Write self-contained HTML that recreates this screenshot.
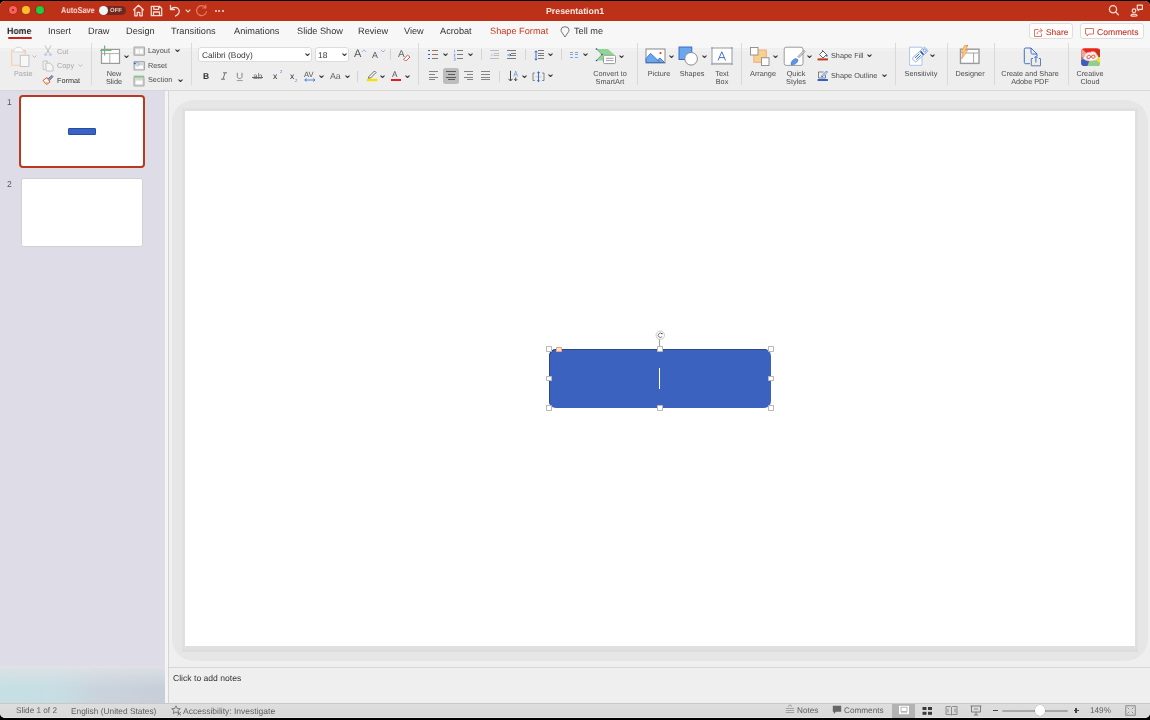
<!DOCTYPE html>
<html><head><meta charset="utf-8">
<style>
*{margin:0;padding:0;box-sizing:border-box}
html,body{-webkit-font-smoothing:antialiased;text-rendering:geometricPrecision;width:1150px;height:720px;overflow:hidden;background:#000;font-family:"Liberation Sans",sans-serif}
.a{position:absolute}
#win{position:absolute;left:0;top:1px;width:1150px;height:717px;background:#efefef;border-radius:5px;overflow:hidden}
#title{position:absolute;left:0;top:0;width:1150px;height:20px;background:#bd3119}
#tabs{position:absolute;left:0;top:20px;width:1150px;height:28px;background:#f7f7f7}
#ribbon{position:absolute;left:0;top:47px;width:1150px;height:42px;background:linear-gradient(180deg,#efefef 0px,#efefef 2px,#f3f3f3 2px,#f3f3f3 3px,#eeeeee 3px)}
#rbline{position:absolute;left:0;top:88.5px;width:1150px;height:1.5px;background:#d7d7d7}
#left{position:absolute;left:0;top:90px;width:165px;height:612px;background:#dedde7}
#lstrip{position:absolute;left:165px;top:90px;width:3px;height:612px;background:#f4f4f4}
#lline{position:absolute;left:168px;top:90px;width:1px;height:612px;background:#d4d4d4}
#main{position:absolute;left:169px;top:90px;width:981px;height:612px;background:#efefef}
#frame{position:absolute;left:172px;top:99px;width:976px;height:561px;background:#e6e6e6;border-radius:22px}
#slide{position:absolute;left:185px;top:110px;width:950px;height:535px;background:#fff;box-shadow:0 0 0 3px #e0e0e0,0 3px 0 3px #dddddd}
#notesline{position:absolute;left:169px;top:666px;width:981px;height:1px;background:#d6d6d6}
#status{position:absolute;left:0;top:702px;width:1150px;height:15px;background:linear-gradient(180deg,#dedede,#d9d9d9);border-top:1px solid #c8c8c8;border-bottom:1px solid #e4e4e4}
.t{position:absolute;white-space:nowrap;line-height:1;will-change:transform}
.tab{font-size:9.2px;color:#333;top:5.6px}
#tabs{top:20px;height:27px}
#lbot{position:absolute;left:0;top:665px;width:165px;height:37px;background:linear-gradient(180deg,rgba(224,226,230,1) 0px,rgba(222,225,230,0.7) 5px,rgba(222,225,230,0) 22px),linear-gradient(100deg,#c5e0e4 0%,#c7dde3 38%,#cad3dc 60%,#c8ced8 100%)}
</style></head><body>
<div id="win">
<div id="title">
<div class="a" style="left:8.5px;top:5px;width:8px;height:8px;border-radius:50%;background:#fe5f57;box-shadow:0 0 0 0.6px #8a2a1c"></div>
<div class="a" style="left:11.5px;top:8px;width:2px;height:2px;border-radius:50%;background:#7e2a22"></div>
<div class="a" style="left:22px;top:5px;width:8px;height:8px;border-radius:50%;background:#febc2e;box-shadow:0 0 0 0.6px #8a4a1c"></div>
<div class="a" style="left:35.5px;top:5px;width:8px;height:8px;border-radius:50%;background:#28c840;box-shadow:0 0 0 0.6px #4a3a1c"></div>
<div class="t" style="left:61px;top:5px;font-size:8.6px;font-weight:bold;color:#f7dcd5;transform-origin:0 0;transform:scaleX(0.85)">AutoSave</div>
<div class="a" style="left:98.5px;top:4.5px;width:27px;height:9.5px;border-radius:5px;background:#6e2a1f"></div>
<div class="a" style="left:99px;top:4.8px;width:9px;height:9px;border-radius:50%;background:#f4f4f4"></div>
<div class="t" style="left:109.5px;top:6.5px;font-size:6px;font-weight:bold;color:#e8c9c2">OFF</div>
<svg class="a" style="left:132px;top:3.3px" width="13" height="13" viewBox="0 0 13 13" fill="none" stroke="#f6dcd4" stroke-width="1.3" stroke-linejoin="round"><path d="M1.3 6.3 L6.5 1.3 L11.7 6.3 M2.8 5 V11.8 H5.2 V8.3 H7.8 V11.8 H10.2 V5"/></svg>
<svg class="a" style="left:150px;top:3.5px" width="13" height="12" viewBox="0 0 13 12" fill="none" stroke="#f6dcd4" stroke-width="1.3" stroke-linejoin="round"><path d="M1.3 1.3 H9.5 L11.7 3.5 V10.7 H1.3 Z M3.8 1.3 V4.3 H8.7 V1.3 M3.5 10.7 V7 H9.5 V10.7"/></svg>
<svg class="a" style="left:169px;top:2.8px" width="12" height="13" viewBox="0 0 12 13" fill="none" stroke="#f6dcd4" stroke-width="1.3" stroke-linecap="round" stroke-linejoin="round"><path d="M1.5 1.5 V5.5 H5.5 M1.8 5.3 C3.5 3 8 2.5 9.8 5.5 C11.2 8 9.5 10.5 6.5 12"/></svg>
<svg class="a" style="left:184.5px;top:8px" width="6" height="4" viewBox="0 0 6 4" fill="none" stroke="#f6dcd4" stroke-width="1.1"><path d="M0.7 0.7 L3 3 L5.3 0.7"/></svg>
<svg class="a" style="left:194.5px;top:3px" width="13" height="13" viewBox="0 0 13 13" fill="none" stroke="#e77a63" stroke-width="1.2" stroke-linecap="round"><path d="M10.5 3.5 A5 5 0 1 0 11.5 7.5 M10.8 1 V4 H7.8"/></svg>
<div class="a" style="left:214.5px;top:9px;width:2px;height:2px;border-radius:50%;background:#f6dcd4"></div>
<div class="a" style="left:218px;top:9px;width:2px;height:2px;border-radius:50%;background:#f6dcd4"></div>
<div class="a" style="left:221.5px;top:9px;width:2px;height:2px;border-radius:50%;background:#f6dcd4"></div>
<div class="t" style="left:545.5px;top:5.5px;font-size:8.8px;font-weight:bold;color:#f9e6e1">Presentation1</div>
<svg class="a" style="left:1107px;top:3.3px" width="14" height="14" viewBox="0 0 14 14" fill="none" stroke="#f6dcd4" stroke-width="1.3" stroke-linecap="round"><circle cx="6" cy="5.2" r="3.6"/><path d="M8.7 7.9 L11.3 10.7"/></svg>
<svg class="a" style="left:1130px;top:3px" width="14" height="14" viewBox="0 0 14 14" fill="none" stroke="#f6dcd4" stroke-width="1.2" stroke-linejoin="round"><path d="M7.3 1.2 H12.4 V5.3 H9.6 L8.2 6.6 V5.3 H7.3 Z"/><circle cx="4" cy="6.7" r="1.8"/><path d="M1 11.6 C1 9.6 7 9.6 7 11.6 C7 12.4 1 12.4 1 11.6 Z"/></svg>
</div>

<div id="tabs">
<div class="t tab" style="left:7px;color:#1d1d1d;font-weight:bold;transform-origin:0 0;transform:scaleX(0.95)">Home</div>
<div class="a" style="left:7.5px;top:16px;width:24.5px;height:2px;border-radius:1px;background:#c0271a"></div>
<div class="t tab" style="left:47.5px">Insert</div>
<div class="t tab" style="left:88px">Draw</div>
<div class="t tab" style="left:125.7px">Design</div>
<div class="t tab" style="left:171px">Transitions</div>
<div class="t tab" style="left:234px">Animations</div>
<div class="t tab" style="left:297px">Slide Show</div>
<div class="t tab" style="left:358px">Review</div>
<div class="t tab" style="left:403.7px">View</div>
<div class="t tab" style="left:440.3px">Acrobat</div>
<div class="t tab" style="left:489.6px;color:#c5371f">Shape Format</div>
<svg class="a" style="left:559.5px;top:4.5px" width="10" height="12" viewBox="0 0 10 12" fill="none" stroke="#666" stroke-width="0.9" stroke-linejoin="round"><path d="M5 11 L2.2 6.8 C1.2 5.5 1 4.8 1 4 A4 3.3 0 0 1 9 4 C9 4.8 8.8 5.5 7.8 6.8 Z"/></svg>
<div class="t tab" style="left:574px">Tell me</div>
<div class="a" style="left:1028.7px;top:2.4px;width:44px;height:15.8px;border-radius:3px;background:#fff;border:0.8px solid #dedede"></div>
<svg class="a" style="left:1033px;top:5.8px" width="11" height="11" viewBox="0 0 11 11" fill="none" stroke="#d86a58" stroke-width="0.9"><path d="M5.5 2.5 H1.5 V9.5 H8.5 V6.5"/><path d="M4 7 C4.5 4.5 6.5 3.5 9 3.5 M7.3 1.7 L9.3 3.5 L7.3 5.3" stroke-linecap="round" stroke-linejoin="round"/></svg>
<div class="t" style="left:1045.5px;top:7.3px;font-size:8.4px;color:#c0392b;-webkit-text-stroke:0.12px #c0392b">Share</div>
<div class="a" style="left:1079.5px;top:2.4px;width:64.5px;height:15.8px;border-radius:3px;background:#fff;border:0.8px solid #dedede"></div>
<svg class="a" style="left:1084px;top:5.8px" width="11" height="11" viewBox="0 0 11 11" fill="none" stroke="#d86a58" stroke-width="0.9" stroke-linejoin="round"><path d="M1.5 1.5 H9.5 V7 H5 L3 9 V7 H1.5 Z"/></svg>
<div class="t" style="left:1096.6px;top:7.3px;font-size:8.6px;color:#c0392b;-webkit-text-stroke:0.12px #c0392b">Comments</div>
</div>

<div id="ribbon"></div>
<div id="rbline"></div>
<div id="left"></div>
<div id="lbot"></div>
<div id="lstrip"></div>
<div id="lline"></div>
<div id="main"></div>
<div id="frame"></div>
<div id="slide"></div>
<div id="notesline"></div>
<div id="status"></div>
<div class="a" style="left:0;top:-1px;width:1150px;height:720px">
<svg class="a" style="left:10px;top:46px" width="22" height="22" viewBox="0 0 22 22" >
<path d="M4 4.3 C4.3 2.5 6.5 1.2 8.5 1.2 C10.5 1.2 12.7 2.5 13 4.3 H13.8 V6 H3.2 V4.3 Z" fill="#fafafa" stroke="#d2d2d2" stroke-width="0.9"/>
<path d="M3.2 4.5 H1.6 V19.2 H10" fill="none" stroke="#f6cfae" stroke-width="1.1"/>
<path d="M14 4.5 H15.2 V8.5" fill="none" stroke="#f4bfa9" stroke-width="1.1"/>
<rect x="10.3" y="9.3" width="8.6" height="11.2" fill="#f8f8f8" stroke="#c6c6c6" stroke-width="1"/></svg>
<svg class="a" style="left:32.30px;top:54.70px" width="5" height="3.4" viewBox="-0.5 -0.5 5 3.4" fill="none" stroke="#b5b5b5" stroke-width="0.9" stroke-linecap="round" stroke-linejoin="round"><path d="M0.3 0.3 L2.0 2.1 L3.7 0.3"/></svg>
<div class="t" style="left:13.60px;top:69.72px;font-size:7.3px;color:#a6a6a6">Paste</div>
<svg class="a" style="left:43px;top:45px" width="10" height="12" viewBox="0 0 10 12" ><path d="M2 0.5 L6.3 8 M8 0.5 L3.7 8" stroke="#b8b8b8" stroke-width="0.9" fill="none"/>
<circle cx="2.7" cy="9.6" r="1.5" fill="#b8d0ee"/><circle cx="7.3" cy="9.6" r="1.5" fill="#b8d0ee"/></svg>
<div class="t" style="left:56.50px;top:47.62px;font-size:7.3px;color:#a6a6a6">Cut</div>
<svg class="a" style="left:41.5px;top:59.5px" width="13" height="12" viewBox="0 0 13 12" ><path d="M5 1 H1 V9.5 H3.7" fill="none" stroke="#c4c4c4" stroke-width="0.9"/>
<path d="M4 1 H4.5 M3.8 3.2 H8 L11 6 V11 H4.2 Z" fill="#f6f6f6" stroke="#bdbdbd" stroke-width="0.9"/>
<path d="M4 1 H5.3 V3" fill="none" stroke="#c4c4c4" stroke-width="0.9"/></svg>
<div class="t" style="left:56.50px;top:62.02px;font-size:7.3px;color:#a6a6a6">Copy</div>
<svg class="a" style="left:77.50px;top:64.00px" width="5" height="3.2" viewBox="-0.5 -0.5 5 3.2" fill="none" stroke="#b0b0b0" stroke-width="0.8" stroke-linecap="round" stroke-linejoin="round"><path d="M0.3 0.3 L2.0 1.9000000000000001 L3.7 0.3"/></svg>
<svg class="a" style="left:41.5px;top:74px" width="12" height="11" viewBox="0 0 12 11" ><path d="M1 6.5 L5 3.5 L8 8 L4.5 10.5 Z" fill="#ffffff" stroke="#e23b2c" stroke-width="0.9"/>
<path d="M3 8.6 L5.2 7.5 L6 8.9 L4.2 10" fill="#f4c64c"/>
<path d="M5.8 5 L10 1.5 L11 2.6 L7.3 6.6" fill="#8aa7c7" stroke="#555" stroke-width="0.8"/></svg>
<div class="t" style="left:56.50px;top:76.72px;font-size:7.3px;color:#333">Format</div>
<div class="a" style="left:91.00px;top:43px;width:1px;height:42px;background:#d9d9d9"></div>
<svg class="a" style="left:99px;top:45px" width="24" height="20" viewBox="0 0 24 20" ><rect x="2.5" y="4.4" width="18" height="14" fill="#fff" stroke="#9a9a9a" stroke-width="1.2"/>
<path d="M2.5 8.6 H20.5 M10.8 8.6 V18.4" stroke="#a5a5a5" stroke-width="0.9"/>
<path d="M5.6 0.8 V10.4" stroke="#9a9a9a" stroke-width="1.1"/><path d="M5.6 0.8 V2.6" stroke="#4cc15a" stroke-width="1.1"/>
<path d="M1 5.5 H12.5" stroke="#5cc56a" stroke-width="1"/></svg>
<svg class="a" style="left:123.90px;top:55.05px" width="5" height="3.3" viewBox="-0.5 -0.5 5 3.3" fill="none" stroke="#3c3c3c" stroke-width="1.15" stroke-linecap="round" stroke-linejoin="round"><path d="M0.3 0.3 L2.0 1.9999999999999998 L3.7 0.3"/></svg>
<div class="t" style="left:54.00px;width:120px;text-align:center;top:70.02px;font-size:7.3px;color:#4d4d4d">New</div>
<div class="t" style="left:54.00px;width:120px;text-align:center;top:77.82px;font-size:7.3px;color:#4d4d4d">Slide</div>
<svg class="a" style="left:133px;top:45.5px" width="13" height="10" viewBox="0 0 13 10" ><rect x="1" y="1" width="10.5" height="8.3" rx="0.8" fill="#d6d6d6" stroke="#a9a9a9" stroke-width="1.1"/><rect x="2.7" y="3.2" width="3.1" height="4.4" fill="#fff"/><rect x="6.7" y="3.2" width="3.1" height="4.4" fill="#fff"/></svg>
<div class="t" style="left:148.30px;top:47.22px;font-size:7.3px;color:#4d4d4d">Layout</div>
<svg class="a" style="left:174.50px;top:49.35px" width="5" height="3.3" viewBox="-0.5 -0.5 5 3.3" fill="none" stroke="#3c3c3c" stroke-width="1.15" stroke-linecap="round" stroke-linejoin="round"><path d="M0.3 0.3 L2.0 1.9999999999999998 L3.7 0.3"/></svg>
<svg class="a" style="left:133px;top:60px" width="13" height="11" viewBox="0 0 13 11" ><rect x="1" y="1.5" width="10.5" height="8.5" rx="0.8" fill="#d6d6d6" stroke="#a9a9a9" stroke-width="1.1"/><rect x="2.5" y="5.5" width="7.5" height="3.3" fill="#fff"/><path d="M2.3 3.6 C3 1.8 5.5 1.8 6 3.8 C6.4 5.5 4.8 6.5 3.5 6" fill="none" stroke="#8fb6ea" stroke-width="0.9"/><circle cx="1.8" cy="3.3" r="0.9" fill="#2f55b8"/></svg>
<div class="t" style="left:148.30px;top:61.62px;font-size:7.3px;color:#4d4d4d">Reset</div>
<svg class="a" style="left:133px;top:74.5px" width="13" height="12" viewBox="0 0 13 12" ><rect x="1" y="2" width="10" height="9" rx="0.8" fill="#d6d6d6" stroke="#a9a9a9" stroke-width="1.1"/><rect x="2.6" y="5.6" width="6.8" height="3.6" fill="#fff"/><path d="M0.8 1.3 H11.2" stroke="#6fd07c" stroke-width="1.3"/></svg>
<div class="t" style="left:148.30px;top:76.42px;font-size:7.3px;color:#4d4d4d">Section</div>
<svg class="a" style="left:177.50px;top:79.05px" width="5" height="3.3" viewBox="-0.5 -0.5 5 3.3" fill="none" stroke="#3c3c3c" stroke-width="1.15" stroke-linecap="round" stroke-linejoin="round"><path d="M0.3 0.3 L2.0 1.9999999999999998 L3.7 0.3"/></svg>
<div class="a" style="left:191.00px;top:43px;width:1px;height:42px;background:#d9d9d9"></div>
<div class="a" style="left:198.3px;top:47.2px;width:113.7px;height:15.2px;background:#fff;border:0.5px solid #dcdcdc;border-radius:3px"></div>
<div class="t" style="left:201.60px;top:50.59px;font-size:8.4px;color:#3a3a3a">Calibri (Body)</div>
<svg class="a" style="left:304.50px;top:53.35px" width="5" height="3.3" viewBox="-0.5 -0.5 5 3.3" fill="none" stroke="#3c3c3c" stroke-width="1.15" stroke-linecap="round" stroke-linejoin="round"><path d="M0.3 0.3 L2.0 1.9999999999999998 L3.7 0.3"/></svg>
<div class="a" style="left:314.5px;top:47.2px;width:34.5px;height:15.2px;background:#fff;border:0.5px solid #dcdcdc;border-radius:3px"></div>
<div class="t" style="left:317.60px;top:50.59px;font-size:8.4px;color:#3a3a3a">18</div>
<svg class="a" style="left:342.30px;top:53.35px" width="5" height="3.3" viewBox="-0.5 -0.5 5 3.3" fill="none" stroke="#3c3c3c" stroke-width="1.15" stroke-linecap="round" stroke-linejoin="round"><path d="M0.3 0.3 L2.0 1.9999999999999998 L3.7 0.3"/></svg>
<div class="t" style="left:353.70px;top:48.89px;font-size:11px;color:#555">A</div>
<svg class="a" style="left:361px;top:49px" width="6" height="4" viewBox="0 0 6 4" ><path d="M0.8 3 L3 0.8 L5.2 3" fill="none" stroke="#7aa6e0" stroke-width="0.8"/></svg>
<div class="t" style="left:372.00px;top:50.75px;font-size:8.8px;color:#555">A</div>
<svg class="a" style="left:379.5px;top:49px" width="6" height="4" viewBox="0 0 6 4" ><path d="M0.8 0.8 L3 3 L5.2 0.8" fill="none" stroke="#7aa6e0" stroke-width="0.8"/></svg>
<div class="a" style="left:390.00px;top:49px;width:1px;height:11px;background:#d4d4d4"></div>
<div class="t" style="left:398.00px;top:49.73px;font-size:10px;color:#666">A</div>
<svg class="a" style="left:401.5px;top:53.5px" width="9" height="7" viewBox="0 0 9 7" ><path d="M1.5 5.5 L5.5 1 L8 3 L4 7 Z" fill="#fff" stroke="#d9534f" stroke-width="0.9"/></svg>
<div class="t" style="left:203.40px;top:71.70px;font-size:8.5px;color:#333;font-weight:bold">B</div>
<svg class="a" style="left:219.5px;top:72px" width="8" height="8" viewBox="0 0 8 8" ><path d="M3 0.8 H7 M1 7.2 H5 M5 0.8 L3 7.2" stroke="#666" stroke-width="0.9" fill="none"/></svg>
<svg class="a" style="left:236px;top:72px" width="8" height="10" viewBox="0 0 8 10" ><path d="M1.3 0.8 V4.5 C1.3 7.2 6 7.2 6 4.5 V0.8" stroke="#777" stroke-width="0.9" fill="none"/><path d="M0.8 8.6 H6.8" stroke="#9a9a9a" stroke-width="1"/></svg>
<div class="t" style="left:252.80px;top:72.49px;font-size:8.4px;color:#666">ab</div>
<div class="a" style="left:252.2px;top:76.6px;width:11px;height:0.9px;background:#666"></div>
<div class="t" style="left:272.80px;top:71.62px;font-size:8.6px;color:#333">x</div>
<div class="t" style="left:279.80px;top:70.04px;font-size:4.2px;color:#3d7fd9">2</div>
<div class="t" style="left:290.00px;top:71.62px;font-size:8.6px;color:#333">x</div>
<div class="t" style="left:295.30px;top:78.64px;font-size:4.2px;color:#3d7fd9">2</div>
<div class="t" style="left:304.20px;top:70.57px;font-size:7.6px;color:#555">AV</div>
<svg class="a" style="left:304px;top:77.5px" width="12" height="4" viewBox="0 0 12 4" ><path d="M0.8 2 H11 M2.5 0.5 L0.8 2 L2.5 3.5 M9.3 0.5 L11 2 L9.3 3.5" stroke="#3b78d8" stroke-width="0.9" fill="none"/></svg>
<svg class="a" style="left:319.30px;top:74.55px" width="5" height="3.3" viewBox="-0.5 -0.5 5 3.3" fill="none" stroke="#3c3c3c" stroke-width="1.15" stroke-linecap="round" stroke-linejoin="round"><path d="M0.3 0.3 L2.0 1.9999999999999998 L3.7 0.3"/></svg>
<div class="t" style="left:329.80px;top:72.05px;font-size:8.8px;color:#666">Aa</div>
<svg class="a" style="left:344.50px;top:74.55px" width="5" height="3.3" viewBox="-0.5 -0.5 5 3.3" fill="none" stroke="#3c3c3c" stroke-width="1.15" stroke-linecap="round" stroke-linejoin="round"><path d="M0.3 0.3 L2.0 1.9999999999999998 L3.7 0.3"/></svg>
<div class="a" style="left:356.50px;top:70.5px;width:1px;height:11.0px;background:#d4d4d4"></div>
<svg class="a" style="left:365.5px;top:70px" width="12" height="12" viewBox="0 0 12 12" ><path d="M3 6.5 L8.5 1 L10 2.5 L4.5 8 L2.5 8.3 Z" fill="#fff" stroke="#555" stroke-width="0.9"/><rect x="0.8" y="8.8" width="10.5" height="2.4" fill="#f6e000"/></svg>
<svg class="a" style="left:379.70px;top:74.55px" width="5" height="3.3" viewBox="-0.5 -0.5 5 3.3" fill="none" stroke="#3c3c3c" stroke-width="1.15" stroke-linecap="round" stroke-linejoin="round"><path d="M0.3 0.3 L2.0 1.9999999999999998 L3.7 0.3"/></svg>
<div class="t" style="left:392.00px;top:71.06px;font-size:8.2px;color:#555">A</div>
<div class="a" style="left:390.5px;top:78.8px;width:10.5px;height:2.4px;background:#e31e1e"></div>
<svg class="a" style="left:405.00px;top:74.55px" width="5" height="3.3" viewBox="-0.5 -0.5 5 3.3" fill="none" stroke="#3c3c3c" stroke-width="1.15" stroke-linecap="round" stroke-linejoin="round"><path d="M0.3 0.3 L2.0 1.9999999999999998 L3.7 0.3"/></svg>
<div class="a" style="left:418.00px;top:43px;width:1px;height:42px;background:#d9d9d9"></div>
<div class="a" style="left:428.4px;top:49.7px;width:1.6px;height:1.6px;background:#1f5fd0;border-radius:0.3px"></div>
<div class="a" style="left:428.4px;top:53.7px;width:1.6px;height:1.6px;background:#1f5fd0;border-radius:0.3px"></div>
<div class="a" style="left:428.4px;top:57.7px;width:1.6px;height:1.6px;background:#1f5fd0;border-radius:0.3px"></div>
<div class="a" style="left:432px;top:50.05px;width:6px;height:0.9px;background:#7a7a7a"></div>
<div class="a" style="left:432px;top:54.05px;width:6px;height:0.9px;background:#7a7a7a"></div>
<div class="a" style="left:432px;top:58.05px;width:6px;height:0.9px;background:#7a7a7a"></div>
<div class="a" style="left:432px;top:50px;width:1.6px;height:1px;background:#e05a3c"></div><div class="a" style="left:432px;top:54px;width:1.6px;height:1px;background:#e05a3c"></div>
<svg class="a" style="left:442.90px;top:53.35px" width="5" height="3.3" viewBox="-0.5 -0.5 5 3.3" fill="none" stroke="#3c3c3c" stroke-width="1.15" stroke-linecap="round" stroke-linejoin="round"><path d="M0.3 0.3 L2.0 1.9999999999999998 L3.7 0.3"/></svg>
<svg class="a" style="left:453px;top:48.5px" width="3" height="12" viewBox="0 0 3 12" ><path d="M1.5 0.8 V3.5 M0.8 5.3 H2.2 L1 7.2 H2.3 M0.8 9 H2.2 V11.3 H0.8" stroke="#4a86de" stroke-width="0.6" fill="none"/></svg>
<div class="a" style="left:456.8px;top:50.05px;width:6.7px;height:0.9px;background:#7a7a7a"></div>
<div class="a" style="left:456.8px;top:54.05px;width:6.7px;height:0.9px;background:#7a7a7a"></div>
<div class="a" style="left:456.8px;top:58.05px;width:6.7px;height:0.9px;background:#7a7a7a"></div>
<svg class="a" style="left:468.20px;top:53.35px" width="5" height="3.3" viewBox="-0.5 -0.5 5 3.3" fill="none" stroke="#3c3c3c" stroke-width="1.15" stroke-linecap="round" stroke-linejoin="round"><path d="M0.3 0.3 L2.0 1.9999999999999998 L3.7 0.3"/></svg>
<div class="a" style="left:480.50px;top:49.3px;width:1px;height:11.0px;background:#d4d4d4"></div>
<div class="a" style="left:489.7px;top:50.1px;width:9.3px;height:0.8px;background:#bcbcbc"></div>
<div class="a" style="left:489.7px;top:58.1px;width:9.3px;height:0.8px;background:#bcbcbc"></div>
<div class="a" style="left:494px;top:52.800000000000004px;width:5px;height:0.8px;background:#bcbcbc"></div>
<div class="a" style="left:494px;top:55.4px;width:5px;height:0.8px;background:#bcbcbc"></div>
<svg class="a" style="left:489.5px;top:52.5px" width="5" height="4" viewBox="0 0 5 4" ><path d="M4.5 2 H1 M2.3 0.8 L1 2 L2.3 3.2" stroke="#a9c6ee" stroke-width="0.7" fill="none"/></svg>
<div class="a" style="left:506.6px;top:50.05px;width:9.6px;height:0.9px;background:#7a7a7a"></div>
<div class="a" style="left:506.6px;top:58.05px;width:9.6px;height:0.9px;background:#7a7a7a"></div>
<div class="a" style="left:511.2px;top:52.75px;width:5px;height:0.9px;background:#7a7a7a"></div>
<div class="a" style="left:511.2px;top:55.349999999999994px;width:5px;height:0.9px;background:#7a7a7a"></div>
<svg class="a" style="left:506.5px;top:52.5px" width="5" height="4" viewBox="0 0 5 4" ><path d="M0.5 2 H4 M2.7 0.8 L4 2 L2.7 3.2" stroke="#1f5fd0" stroke-width="0.8" fill="none"/></svg>
<div class="a" style="left:524.80px;top:49.3px;width:1px;height:11.0px;background:#d4d4d4"></div>
<svg class="a" style="left:533.5px;top:49.5px" width="4" height="11" viewBox="0 0 4 11" ><path d="M2 1 V10 M0.8 2.2 L2 0.8 L3.2 2.2 M0.8 8.8 L2 10.2 L3.2 8.8" stroke="#1f5fd0" stroke-width="0.9" fill="none"/></svg>
<div class="a" style="left:538px;top:50.05px;width:6px;height:0.9px;background:#7a7a7a"></div>
<div class="a" style="left:538px;top:52.65px;width:6px;height:0.9px;background:#7a7a7a"></div>
<div class="a" style="left:538px;top:55.349999999999994px;width:6px;height:0.9px;background:#7a7a7a"></div>
<div class="a" style="left:538px;top:58.05px;width:6px;height:0.9px;background:#7a7a7a"></div>
<svg class="a" style="left:548.30px;top:53.35px" width="5" height="3.3" viewBox="-0.5 -0.5 5 3.3" fill="none" stroke="#3c3c3c" stroke-width="1.15" stroke-linecap="round" stroke-linejoin="round"><path d="M0.3 0.3 L2.0 1.9999999999999998 L3.7 0.3"/></svg>
<div class="a" style="left:560.50px;top:49.3px;width:1px;height:11.0px;background:#d4d4d4"></div>
<div class="a" style="left:570px;top:52.1px;width:3.4px;height:0.8px;background:#7aa6e8"></div>
<div class="a" style="left:570px;top:54.300000000000004px;width:3.4px;height:0.8px;background:#7aa6e8"></div>
<div class="a" style="left:570px;top:56.5px;width:3.4px;height:0.8px;background:#7aa6e8"></div>
<div class="a" style="left:574.6px;top:52.1px;width:3.4px;height:0.8px;background:#7aa6e8"></div>
<div class="a" style="left:574.6px;top:54.300000000000004px;width:3.4px;height:0.8px;background:#7aa6e8"></div>
<div class="a" style="left:574.6px;top:56.5px;width:3.4px;height:0.8px;background:#7aa6e8"></div>
<svg class="a" style="left:583.30px;top:53.35px" width="5" height="3.3" viewBox="-0.5 -0.5 5 3.3" fill="none" stroke="#3c3c3c" stroke-width="1.15" stroke-linecap="round" stroke-linejoin="round"><path d="M0.3 0.3 L2.0 1.9999999999999998 L3.7 0.3"/></svg>
<svg class="a" style="left:595px;top:48px" width="22" height="17" viewBox="0 0 22 17" ><path d="M1.5 1 H13 L19 6.5 L13 12.5 H1.5 L7 6.5 Z" fill="#8fd694"/>
<path d="M1.5 1 L7 6.5 L1.5 12.5" fill="none" stroke="#3d8b48" stroke-width="0.6"/>
<circle cx="1.5" cy="1" r="0.8" fill="#1f3fae"/><circle cx="7" cy="6.5" r="0.8" fill="#1f3fae"/><circle cx="1.5" cy="12.5" r="0.8" fill="#1f3fae"/>
<rect x="8.5" y="7.3" width="12" height="8.3" rx="1.2" fill="#fff" stroke="#9a9a9a" stroke-width="1"/>
<path d="M11 10.3 H18.5 M11 12.6 H18.5" stroke="#777" stroke-width="0.7"/></svg>
<svg class="a" style="left:619.30px;top:54.85px" width="5" height="3.3" viewBox="-0.5 -0.5 5 3.3" fill="none" stroke="#3c3c3c" stroke-width="1.15" stroke-linecap="round" stroke-linejoin="round"><path d="M0.3 0.3 L2.0 1.9999999999999998 L3.7 0.3"/></svg>
<div class="t" style="left:550.30px;width:120px;text-align:center;top:70.02px;font-size:7.3px;color:#4d4d4d">Convert to</div>
<div class="t" style="left:550.30px;width:120px;text-align:center;top:77.82px;font-size:7.3px;color:#4d4d4d">SmartArt</div>
<div class="a" style="left:636.50px;top:43px;width:1px;height:42px;background:#d9d9d9"></div>
<div class="a" style="left:429.1px;top:71.35px;width:9px;height:0.9px;background:#858585"></div>
<div class="a" style="left:429.1px;top:73.95px;width:6px;height:0.9px;background:#858585"></div>
<div class="a" style="left:429.1px;top:76.75px;width:9px;height:0.9px;background:#858585"></div>
<div class="a" style="left:429.1px;top:79.45px;width:6px;height:0.9px;background:#858585"></div>
<div class="a" style="left:443px;top:68.1px;width:15.8px;height:15.6px;background:#bdbdbd;border-radius:2.5px"></div>
<div class="a" style="left:446px;top:71.325px;width:10px;height:0.95px;background:#5a5a5a"></div>
<div class="a" style="left:447.5px;top:73.92500000000001px;width:7px;height:0.95px;background:#5a5a5a"></div>
<div class="a" style="left:446px;top:76.72500000000001px;width:10px;height:0.95px;background:#5a5a5a"></div>
<div class="a" style="left:447.5px;top:79.42500000000001px;width:7px;height:0.95px;background:#5a5a5a"></div>
<div class="a" style="left:463.7px;top:71.35px;width:9px;height:0.9px;background:#858585"></div>
<div class="a" style="left:466.7px;top:73.95px;width:6px;height:0.9px;background:#858585"></div>
<div class="a" style="left:463.7px;top:76.75px;width:9px;height:0.9px;background:#858585"></div>
<div class="a" style="left:466.7px;top:79.45px;width:6px;height:0.9px;background:#858585"></div>
<div class="a" style="left:480.8px;top:71.35px;width:9.2px;height:0.9px;background:#858585"></div>
<div class="a" style="left:480.8px;top:73.95px;width:9.2px;height:0.9px;background:#858585"></div>
<div class="a" style="left:480.8px;top:76.75px;width:9.2px;height:0.9px;background:#858585"></div>
<div class="a" style="left:480.8px;top:79.45px;width:9.2px;height:0.9px;background:#858585"></div>
<div class="a" style="left:499.00px;top:70.8px;width:1px;height:11.0px;background:#d4d4d4"></div>
<svg class="a" style="left:507px;top:70px" width="13" height="12" viewBox="0 0 13 12" ><path d="M3.5 0.8 V10.5 M1.5 8.8 L3.5 11 L5.5 8.8" stroke="#333" stroke-width="0.9" fill="none"/>
<path d="M6.8 6.5 L8.7 1 L10.6 6.5 M7.5 4.7 H9.9" stroke="#6d9ee6" stroke-width="0.8" fill="none"/>
<path d="M8.7 7.5 V10.5 M7.3 9.2 L8.7 10.8 L10.1 9.2" stroke="#333" stroke-width="0.9" fill="none"/></svg>
<svg class="a" style="left:522.30px;top:74.85px" width="5" height="3.3" viewBox="-0.5 -0.5 5 3.3" fill="none" stroke="#3c3c3c" stroke-width="1.15" stroke-linecap="round" stroke-linejoin="round"><path d="M0.3 0.3 L2.0 1.9999999999999998 L3.7 0.3"/></svg>
<svg class="a" style="left:532px;top:70.5px" width="13" height="12" viewBox="0 0 13 12" ><path d="M2.8 2 H1 V9.5 H2.8 M10.2 2 H12 V9.5 H10.2" stroke="#777" stroke-width="0.9" fill="none"/>
<path d="M3.5 5.75 H9.5" stroke="#bbb" stroke-width="0.7"/>
<path d="M6.5 0.8 V10.7 M5.2 2.1 L6.5 0.8 L7.8 2.1 M5.2 9.4 L6.5 10.7 L7.8 9.4" stroke="#1f5fd0" stroke-width="0.9" fill="none"/></svg>
<svg class="a" style="left:547.50px;top:74.35px" width="5" height="3.3" viewBox="-0.5 -0.5 5 3.3" fill="none" stroke="#3c3c3c" stroke-width="1.15" stroke-linecap="round" stroke-linejoin="round"><path d="M0.3 0.3 L2.0 1.9999999999999998 L3.7 0.3"/></svg>
<svg class="a" style="left:645px;top:48px" width="21" height="16" viewBox="0 0 21 16" ><rect x="1" y="1" width="19" height="14" fill="#fff" stroke="#8a8a8a" stroke-width="1"/>
<path d="M1 10.5 L5.6 5.4 L12.5 12 L15 10 L19.5 14.5 H1 Z" fill="#6aa7ee" stroke="#2f63c4" stroke-width="0.8" stroke-linejoin="round"/>
<path d="M12.5 12 L15.5 15" stroke="#2f63c4" stroke-width="0.8"/>
<circle cx="15.5" cy="5" r="1.1" fill="#e0352b"/></svg>
<svg class="a" style="left:668.60px;top:54.95px" width="5" height="3.3" viewBox="-0.5 -0.5 5 3.3" fill="none" stroke="#3c3c3c" stroke-width="1.15" stroke-linecap="round" stroke-linejoin="round"><path d="M0.3 0.3 L2.0 1.9999999999999998 L3.7 0.3"/></svg>
<div class="t" style="left:598.80px;width:120px;text-align:center;top:70.02px;font-size:7.3px;color:#4d4d4d">Picture</div>
<svg class="a" style="left:678px;top:46px" width="22" height="20" viewBox="0 0 22 20" ><rect x="1" y="1" width="12.8" height="12.5" fill="#6aa7ee" stroke="#2f63c4" stroke-width="0.9"/>
<circle cx="13.1" cy="12.8" r="6.3" fill="#fff" stroke="#8a8a8a" stroke-width="1"/></svg>
<svg class="a" style="left:701.80px;top:54.95px" width="5" height="3.3" viewBox="-0.5 -0.5 5 3.3" fill="none" stroke="#3c3c3c" stroke-width="1.15" stroke-linecap="round" stroke-linejoin="round"><path d="M0.3 0.3 L2.0 1.9999999999999998 L3.7 0.3"/></svg>
<div class="t" style="left:632.10px;width:120px;text-align:center;top:70.02px;font-size:7.3px;color:#4d4d4d">Shapes</div>
<svg class="a" style="left:711px;top:47px" width="22" height="18" viewBox="0 0 22 18" ><rect x="1" y="1" width="20" height="16" fill="#fff" stroke="#9a9a9a" stroke-width="1"/>
<path d="M1 16.5 H21" stroke="#b5b5b5" stroke-width="1.4"/>
<path d="M7 13.5 L10.8 4.8 L14.6 13.5 M8.3 10.6 H13.3" stroke="#2f63c4" stroke-width="0.9" fill="none"/>
<circle cx="1" cy="1" r="1" fill="#86aee8"/><circle cx="21" cy="1" r="1" fill="#86aee8"/><circle cx="1" cy="17" r="1" fill="#86aee8"/><circle cx="21" cy="17" r="1" fill="#86aee8"/></svg>
<div class="t" style="left:661.70px;width:120px;text-align:center;top:70.02px;font-size:7.3px;color:#4d4d4d">Text</div>
<div class="t" style="left:661.70px;width:120px;text-align:center;top:77.82px;font-size:7.3px;color:#4d4d4d">Box</div>
<div class="a" style="left:741.00px;top:43px;width:1px;height:42px;background:#d9d9d9"></div>
<svg class="a" style="left:749px;top:46px" width="22" height="21" viewBox="0 0 22 21" ><rect x="4.8" y="4" width="12.5" height="12.3" fill="#f7d28c" stroke="#f2a48c" stroke-width="0.9"/>
<rect x="1.5" y="1.5" width="7.5" height="7.5" fill="#fff" stroke="#8a8a8a" stroke-width="0.9"/>
<rect x="12.5" y="11.8" width="7.5" height="7.7" fill="#fff" stroke="#8a8a8a" stroke-width="0.9"/></svg>
<svg class="a" style="left:773.10px;top:54.75px" width="5" height="3.3" viewBox="-0.5 -0.5 5 3.3" fill="none" stroke="#3c3c3c" stroke-width="1.15" stroke-linecap="round" stroke-linejoin="round"><path d="M0.3 0.3 L2.0 1.9999999999999998 L3.7 0.3"/></svg>
<div class="t" style="left:703.10px;width:120px;text-align:center;top:70.02px;font-size:7.3px;color:#4d4d4d">Arrange</div>
<svg class="a" style="left:782.5px;top:46px" width="23" height="21" viewBox="0 0 23 21" ><rect x="1.2" y="1.2" width="18.8" height="18.2" rx="2" fill="#fff" stroke="#9a9a9a" stroke-width="1"/>
<path d="M14.5 11 L21 4.5 L22 5.5 L15.5 12" fill="#fff" stroke="#666" stroke-width="0.8"/>
<path d="M8 18.5 C8 15 10.5 13 13 12.5 L15 13.8 C14.5 17 11.5 19.5 8 18.5 Z" fill="#5a97e8" stroke="#2f63c4" stroke-width="0.6"/></svg>
<svg class="a" style="left:806.50px;top:54.75px" width="5" height="3.3" viewBox="-0.5 -0.5 5 3.3" fill="none" stroke="#3c3c3c" stroke-width="1.15" stroke-linecap="round" stroke-linejoin="round"><path d="M0.3 0.3 L2.0 1.9999999999999998 L3.7 0.3"/></svg>
<div class="t" style="left:736.30px;width:120px;text-align:center;top:70.02px;font-size:7.3px;color:#4d4d4d">Quick</div>
<div class="t" style="left:736.30px;width:120px;text-align:center;top:77.82px;font-size:7.3px;color:#4d4d4d">Styles</div>
<svg class="a" style="left:816.5px;top:48.5px" width="12" height="12" viewBox="0 0 12 12" ><path d="M2.5 5.5 L6 2 L9.5 5.5 L6 9 Z" fill="#fff" stroke="#555" stroke-width="0.9"/>
<path d="M5 1 L6.5 2.5" stroke="#555" stroke-width="0.9"/><path d="M9.8 5 L10.8 7 L9.8 7.8 L8.8 7 Z" fill="#2f63c4"/>
<rect x="0.6" y="9.4" width="10.3" height="2" fill="#c2361c"/></svg>
<div class="t" style="left:831.30px;top:51.62px;font-size:7.3px;color:#4d4d4d">Shape Fill</div>
<svg class="a" style="left:867.10px;top:53.85px" width="5" height="3.3" viewBox="-0.5 -0.5 5 3.3" fill="none" stroke="#3c3c3c" stroke-width="1.15" stroke-linecap="round" stroke-linejoin="round"><path d="M0.3 0.3 L2.0 1.9999999999999998 L3.7 0.3"/></svg>
<svg class="a" style="left:816.5px;top:70px" width="12" height="12" viewBox="0 0 12 12" ><path d="M6.5 2 H1.5 V8 H8.5 V5" fill="none" stroke="#666" stroke-width="0.8"/>
<path d="M4.5 7 L5 5.5 L9.5 1 L10.5 2 L6 6.5 Z" fill="#fff" stroke="#2f63c4" stroke-width="0.8"/>
<rect x="0.6" y="9" width="10.3" height="2" fill="#2f5fc8"/></svg>
<div class="t" style="left:831.30px;top:72.42px;font-size:7.3px;color:#4d4d4d">Shape Outline</div>
<svg class="a" style="left:881.80px;top:74.35px" width="5" height="3.3" viewBox="-0.5 -0.5 5 3.3" fill="none" stroke="#3c3c3c" stroke-width="1.15" stroke-linecap="round" stroke-linejoin="round"><path d="M0.3 0.3 L2.0 1.9999999999999998 L3.7 0.3"/></svg>
<div class="a" style="left:895.30px;top:43px;width:1px;height:42px;background:#d9d9d9"></div>
<svg class="a" style="left:908px;top:45px" width="22" height="22" viewBox="0 0 22 22" ><path d="M1.6 2.2 H14 V20.3 H1.6 Z" fill="#fff" stroke="#a9c6ee" stroke-width="1"/>
<g transform="rotate(-42 12 9.5)"><rect x="3.5" y="7" width="17" height="5.3" rx="1" fill="#fff" stroke="#7aa6e0" stroke-width="0.8"/>
<path d="M6 8.6 H12 M6 10.6 H12" stroke="#2f63c4" stroke-width="0.9"/><path d="M14.5 7.5 V12" stroke="#1f4fb8" stroke-width="1.6"/><rect x="17" y="8.3" width="2.2" height="2.8" fill="#fff" stroke="#2f63c4" stroke-width="0.7"/></g></svg>
<svg class="a" style="left:930.00px;top:54.45px" width="5" height="3.3" viewBox="-0.5 -0.5 5 3.3" fill="none" stroke="#3c3c3c" stroke-width="1.15" stroke-linecap="round" stroke-linejoin="round"><path d="M0.3 0.3 L2.0 1.9999999999999998 L3.7 0.3"/></svg>
<div class="t" style="left:860.80px;width:120px;text-align:center;top:70.02px;font-size:7.3px;color:#4d4d4d">Sensitivity</div>
<div class="a" style="left:946.80px;top:43px;width:1px;height:42px;background:#d9d9d9"></div>
<svg class="a" style="left:958px;top:44px" width="22" height="21" viewBox="0 0 22 21" ><rect x="2.5" y="5.2" width="18.5" height="14.2" fill="#fff" stroke="#9a9a9a" stroke-width="1.4"/>
<path d="M3.5 9 H20 M15.6 9 V19" stroke="#9a9a9a" stroke-width="0.9"/>
<path d="M6.5 1.5 L9.3 1.5 L7.5 6.5 L9.5 6.5 L3.5 15 L5.2 8.5 L3.3 8.5 Z" fill="#f7cf6a" stroke="#f0896a" stroke-width="0.7" stroke-linejoin="round"/>
<circle cx="9.3" cy="1.8" r="0.6" fill="#e0352b"/></svg>
<div class="t" style="left:909.80px;width:120px;text-align:center;top:70.02px;font-size:7.3px;color:#4d4d4d">Designer</div>
<div class="a" style="left:993.50px;top:43px;width:1px;height:42px;background:#d9d9d9"></div>
<svg class="a" style="left:1023px;top:47px" width="20" height="21" viewBox="0 0 20 21" ><path d="M7 16.7 H2.5 C1.8 16.7 1.3 16.2 1.3 15.5 V2.2 C1.3 1.5 1.8 1 2.5 1 H8 L14 7 V9.5" fill="none" stroke="#2f63c4" stroke-width="0.9"/>
<path d="M8 1 V5.5 C8 6.3 8.5 7 9.3 7 H14" fill="none" stroke="#2f63c4" stroke-width="0.9"/>
<path d="M10 11.5 H8.3 V18.8 H17.5 V11.5 H15.8" fill="none" stroke="#55739e" stroke-width="0.9" stroke-linejoin="round"/>
<path d="M12.9 15.5 V9.5 M11.3 11 L12.9 9.4 L14.5 11" fill="none" stroke="#2f63c4" stroke-width="0.9"/></svg>
<div class="t" style="left:970.30px;width:120px;text-align:center;top:70.02px;font-size:7.3px;color:#4d4d4d">Create and Share</div>
<div class="t" style="left:970.30px;width:120px;text-align:center;top:77.82px;font-size:7.3px;color:#4d4d4d">Adobe PDF</div>
<div class="a" style="left:1068.40px;top:43px;width:1px;height:42px;background:#d9d9d9"></div>
<svg class="a" style="left:1081px;top:47.5px" width="19.5" height="18.5" viewBox="0 0 19.5 18.5" ><defs><clipPath id="cc"><rect x="0.3" y="0.2" width="18.7" height="17.8" rx="3.2"/></clipPath></defs>
<g clip-path="url(#cc)">
<rect x="0" y="0" width="20" height="19" fill="#e8261c"/>
<path d="M0 0 L9.7 9 L0 9 Z" fill="#eba39b"/>
<path d="M20 0 L9.7 9 L20 9 Z" fill="#c03a1c"/>
<path d="M20 9 L9.7 9 L20 19 Z" fill="#f5e22a"/>
<path d="M0 9 L9.7 9 L0 19 Z" fill="#8c8c8c"/>
<path d="M0 12 L9.7 9 L6 19 L0 19 Z" fill="#3a5fc0"/>
<path d="M6 19 L9.7 9 L20 15.5 L20 19 Z" fill="#8fd08d"/>
<path d="M3.5 11.5 C2 11.5 1.8 9 3.5 8.6 C3.5 5.5 6.5 3.8 9.3 4.3 C11 2.8 15 3.3 15.8 6.8 C17.6 7.3 17.6 11.5 15.5 11.8 C13 13.5 6 13.5 3.5 11.5 Z" fill="#fff" opacity="0.9"/>
<path d="M3.5 11.5 C2 11.5 1.8 9 3.5 8.6 C3.5 5.5 6.5 3.8 9.3 4.3 C11 2.8 15 3.3 15.8 6.8 C17.6 7.3 17.6 11.5 15.5 11.8 C13 13.5 6 13.5 3.5 11.5 Z" fill="none" stroke="#f2a49a" stroke-width="0.6"/>
<path d="M6 9.3 C6 6.8 9 6.8 10.2 8.8 C11.3 10.8 14 10.8 14 8.7 C14 6.7 11.2 6.7 10 8.7 C8.8 10.8 6 11.5 6 9.3 Z" fill="none" stroke="#e0301e" stroke-width="0.9"/>
</g></svg>
<div class="t" style="left:1030.30px;width:120px;text-align:center;top:70.02px;font-size:7.3px;color:#4d4d4d">Creative</div>
<div class="t" style="left:1030.30px;width:120px;text-align:center;top:77.82px;font-size:7.3px;color:#4d4d4d">Cloud</div>

<div class="t" style="left:7px;top:98.4px;font-size:8.5px;color:#555">1</div>
<div class="a" style="left:19px;top:95px;width:126px;height:73px;border:2px solid #b8391e;border-radius:4px;background:#fff"></div>
<div class="a" style="left:67.9px;top:127.9px;width:28.1px;height:7.1px;background:#3b62c0;border:0.7px solid #1f4db0;border-radius:1px"></div>
<div class="t" style="left:7px;top:180px;font-size:8.5px;color:#555">2</div>
<div class="a" style="left:20.5px;top:178.3px;width:122.5px;height:68.7px;border:0.7px solid #d2d2d2;border-radius:2.5px;background:#fff"></div>
<!-- shape -->
<div class="a" style="left:548.8px;top:349px;width:222px;height:58.8px;background:#3b62be;border-radius:7px;box-shadow:inset 0.8px 0.8px 0 #2a4070"></div>
<div class="a" style="left:659.2px;top:368.2px;width:1.1px;height:21.2px;background:#fff"></div>
<div class="a" style="left:659.2px;top:339px;width:0.8px;height:8px;background:#a0a0a0"></div>
<svg class="a" style="left:654.5px;top:329.5px" width="11" height="11" viewBox="0 0 11 11"><circle cx="5.25" cy="5.25" r="4.2" fill="#fff" stroke="#b5b5b5" stroke-width="0.7"/><path d="M7 3.8 A2.2 2.2 0 1 0 7.2 6.5" fill="none" stroke="#444" stroke-width="0.7"/><path d="M6 3.2 L7.6 3 L7.2 4.6 Z" fill="#222"/></svg>
<div class="a" style="left:545.8px;top:346.2px;width:6px;height:5.6px;background:#fff;border:0.7px solid #b8b8b8;border-radius:0.8px"></div>
<div class="a" style="left:656.8px;top:346.2px;width:6px;height:5.6px;background:#fff;border:0.7px solid #b8b8b8;border-radius:0.8px"></div>
<div class="a" style="left:767.8px;top:346.2px;width:6px;height:5.6px;background:#fff;border:0.7px solid #b8b8b8;border-radius:0.8px"></div>
<div class="a" style="left:545.8px;top:375.6px;width:6px;height:5.6px;background:#fff;border:0.7px solid #b8b8b8;border-radius:0.8px"></div>
<div class="a" style="left:767.8px;top:375.6px;width:6px;height:5.6px;background:#fff;border:0.7px solid #b8b8b8;border-radius:0.8px"></div>
<div class="a" style="left:545.8px;top:405.0px;width:6px;height:5.6px;background:#fff;border:0.7px solid #b8b8b8;border-radius:0.8px"></div>
<div class="a" style="left:656.8px;top:405.0px;width:6px;height:5.6px;background:#fff;border:0.7px solid #b8b8b8;border-radius:0.8px"></div>
<div class="a" style="left:767.8px;top:405.0px;width:6px;height:5.6px;background:#fff;border:0.7px solid #b8b8b8;border-radius:0.8px"></div>
<div class="a" style="left:556.2px;top:347px;width:5.4px;height:5.2px;background:#fbe5bf;border:0.8px solid #ef9f8f;border-radius:0.8px"></div>
<div class="t" style="left:173.3px;top:673.6px;font-size:8.6px;color:#333">Click to add notes</div>
<div class="t" style="left:16px;top:707.06px;font-size:8.2px;color:#5e5e5e">Slide 1 of 2</div>
<div class="t" style="left:71.3px;top:706.93px;font-size:8.35px;color:#5e5e5e">English (United States)</div>
<svg class="a" style="left:170.5px;top:705px" width="11" height="11" viewBox="0 0 11 11" fill="none" stroke="#666" stroke-width="0.8"><path d="M5 0.8 L6.2 3.5 L9.3 3.7 L7 5.6 L7.7 8.6 L5 7 L2.3 8.6 L3 5.6 L0.7 3.7 L3.8 3.5 Z"/><path d="M6.5 7 L10 10.3 M10 7 L6.5 10.3" stroke-width="0.9"/></svg>
<div class="t" style="left:183.2px;top:706.89px;font-size:8.5px;color:#5e5e5e">Accessibility: Investigate</div>
<svg class="a" style="left:784.5px;top:704px" width="10" height="10" viewBox="0 0 10 10" fill="none" stroke="#7a7a7a" stroke-width="0.7"><path d="M3 2.6 L5 0.8 L7 2.6"/><path d="M0.8 4.5 H9.2 M0.8 6.5 H9.2 M0.8 8.5 H9.2" stroke="#8a8a8a"/></svg>
<div class="t" style="left:797px;top:707.06px;font-size:8.2px;color:#5e5e5e">Notes</div>
<svg class="a" style="left:832px;top:705px" width="10" height="10" viewBox="0 0 10 10"><path d="M0.8 0.8 H9.2 V6.8 H4 L1.8 9 V6.8 H0.8 Z" fill="#666"/></svg>
<div class="t" style="left:843.6px;top:707.06px;font-size:8.2px;color:#5e5e5e">Comments</div>
<div class="a" style="left:891.6px;top:704px;width:23.6px;height:13.5px;background:#b3b3b3"></div>
<svg class="a" style="left:897.5px;top:705px" width="12" height="10" viewBox="0 0 12 10"><rect x="1" y="0.8" width="10" height="8.4" fill="#fff"/><rect x="3" y="2.2" width="6" height="4.2" fill="none" stroke="#9a9a9a" stroke-width="0.7"/><path d="M3 7.7 H9" stroke="#9a9a9a" stroke-width="0.6"/></svg>
<svg class="a" style="left:922px;top:705.5px" width="11" height="10" viewBox="0 0 11 10" fill="#3a3a3a"><rect x="0.5" y="1" width="4" height="3"/><rect x="6" y="1" width="4" height="3"/><rect x="0.5" y="5.8" width="4" height="3"/><rect x="6" y="5.8" width="4" height="3"/></svg>
<svg class="a" style="left:945px;top:705px" width="13" height="11" viewBox="0 0 13 11" fill="none" stroke="#777" stroke-width="0.8"><path d="M1 1.5 H5.5 L6.5 2.3 L7.5 1.5 H12 V9.5 H7.5 L6.5 10 L5.5 9.5 H1 Z M6.5 2.3 V9.8 M3 3.5 V7.5 M10 3.5 V7.5"/></svg>
<svg class="a" style="left:969.5px;top:705px" width="12" height="11" viewBox="0 0 12 11" fill="none" stroke="#666" stroke-width="0.8"><path d="M0.5 1 H11.5 M1.5 1 V7 H10.5 V1 M6 7 V10 M4 10 H8"/><path d="M4 4 H8" stroke-width="0.7"/></svg>
<div class="a" style="left:992.5px;top:709.8px;width:5.2px;height:1.3px;background:#444"></div>
<div class="a" style="left:1002.2px;top:709.6px;width:66px;height:2px;border-radius:1px;background:#a8a8a8"></div>
<div class="a" style="left:1034.5px;top:705.2px;width:10.5px;height:10.5px;border-radius:50%;background:#fff;box-shadow:0 0 0.6px 0.3px rgba(0,0,0,0.25)"></div>
<div class="a" style="left:1073.5px;top:709.8px;width:5.2px;height:1.3px;background:#444"></div><div class="a" style="left:1075.45px;top:707.85px;width:1.3px;height:5.2px;background:#444"></div>
<div class="t" style="left:1090px;top:707.06px;font-size:8.2px;color:#5e5e5e">149%</div>
<svg class="a" style="left:1124.5px;top:704.5px" width="11" height="11" viewBox="0 0 11 11" fill="none" stroke="#777" stroke-width="0.8"><rect x="0.8" y="0.8" width="9.4" height="9.4"/><path d="M2.5 2.5 L4.3 4.3 M8.5 2.5 L6.7 4.3 M2.5 8.5 L4.3 6.7 M8.5 8.5 L6.7 6.7"/></svg>

</div>
</div>
</body></html>
